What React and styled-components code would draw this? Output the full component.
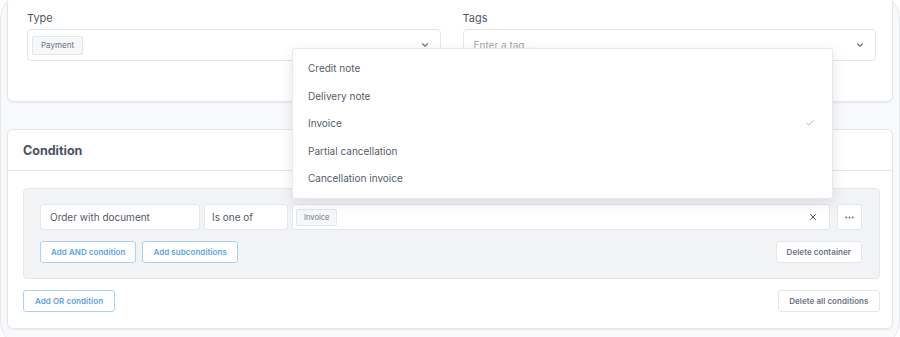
import React from "react";
import styled, { createGlobalStyle } from "styled-components";
import { ChevronDown, X, Check, Ellipsis } from "lucide-react";

const GlobalStyle = createGlobalStyle`
  html, body { margin: 0; padding: 0; background: #ffffff; overflow: hidden; }
  body { font-family: Inter, "Noto Sans", "Liberation Sans", sans-serif; }
  * { box-sizing: border-box; }
`;

const Frame = styled.div`
  width: 900px;
  height: 360px;
  margin-top: -10px;
  border: 1px solid #e6e8ec;
  border-radius: 30px;
  background: #f8f9fa;
  padding: 0 6px;
  overflow: hidden;
`;

const Card = styled.section`
  background: #ffffff;
  border: 1px solid #e3e6ea;
  border-radius: 6px;
  box-shadow: 0 1px 2px rgba(16, 24, 40, 0.06);
  margin-top: ${(p) => p.$mt}px;
`;

const TopCard = styled(Card)`
  padding: 14px 16px 40px 19px;
`;

const FieldGrid = styled.div`
  display: grid;
  grid-template-columns: 1fr 1fr;
  column-gap: 22px;
`;

const Field = styled.div`
  display: flex;
  flex-direction: column;
  gap: 4px;
`;

const Label = styled.label`
  font-size: 11px;
  line-height: 14px;
  color: #525966;
`;

const SelectBox = styled.div`
  height: 32px;
  border: 1px solid #e3e6ea;
  border-radius: 4px;
  background: #fff;
  display: flex;
  align-items: center;
  padding: 0 10px 0 4px;
  gap: 6px;
`;

const Placeholder = styled.span`
  flex: 1;
  padding-left: 6px;
  font-size: 10px;
  color: #a0a6b0;
`;

const Spacer = styled.span`
  flex: 1;
`;

const Tag = styled.span`
  display: inline-flex;
  align-items: center;
  height: ${(p) => p.$h}px;
  padding: 0 ${(p) => p.$px}px;
  border: 1px solid #e3e6ea;
  border-radius: 2px;
  background: #f6f7f8;
  font-size: ${(p) => p.$fs}px;
  color: #6b7280;
`;

const Header = styled.header`
  height: 41px;
  border-bottom: 1px solid #e3e6ea;
  display: flex;
  align-items: center;
  padding-left: 15px;
  font-size: 12.5px;
  font-weight: 700;
  color: #4a5160;
`;

const Body = styled.div`
  padding: 17px 12px 16px 15px;
`;

const Group = styled.div`
  background: #f2f3f5;
  border: 1px solid #e3e6ea;
  border-radius: 4px;
  padding: 15px 17px 15px 16px;
`;

const CondRow = styled.div`
  display: flex;
  align-items: stretch;
  height: 26px;
  gap: 4px;
`;

const Input = styled.div`
  position: relative;
  width: ${(p) => (p.$w ? `${p.$w}px` : "auto")};
  flex: ${(p) => (p.$w ? "none" : "1")};
  background: #fff;
  border: 1px solid #e3e6ea;
  border-radius: 3px;
  display: flex;
  align-items: center;
  padding: 0 ${(p) => p.$pr || 8}px 0 ${(p) => p.$pl}px;
  font-size: 10px;
  color: #525966;
  gap: 6px;
`;

const MoreButton = styled.button`
  width: 25px;
  margin-left: 3px;
  background: #fff;
  border: 1px solid #e3e6ea;
  border-radius: 3px;
  display: flex;
  align-items: center;
  justify-content: center;
  padding: 0;
  color: #6b7280;
`;

const ActionRow = styled.div`
  display: flex;
  align-items: center;
  gap: 6px;
  margin-top: ${(p) => p.$mt}px;
`;

const Button = styled.button`
  height: ${(p) => p.$h || 22}px;
  padding: 0 ${(p) => p.$px || 10}px;
  border-radius: 3px;
  font-family: Inter, "Noto Sans", "Liberation Sans", sans-serif;
  font-size: 8px;
  font-weight: 600;
  letter-spacing: 0.05px;
  background: #fff;
  cursor: pointer;
  border: ${(p) => (p.$primary ? "1.5px solid #a9d3f6" : "1px solid #e3e6ea")};
  color: ${(p) => (p.$primary ? "#5aa2e3" : "#6b7280")};
  margin-left: ${(p) => (p.$right ? "auto" : "0")};
`;

const Menu = styled.ul`
  position: absolute;
  left: -1px;
  right: -4px;
  bottom: calc(100% + 6px);
  margin: 0;
  padding: 6px 0;
  list-style: none;
  background: #fff;
  border: 1px solid #e6e8ec;
  border-radius: 3px;
  box-shadow: 0 4px 14px rgba(16, 24, 40, 0.1);
  z-index: 10;
`;

const MenuItem = styled.li`
  height: 27.5px;
  display: flex;
  align-items: center;
  justify-content: space-between;
  padding: 0 17px 0 15px;
  font-size: 10px;
  color: #555c68;
`;

const items = [
  "Credit note",
  "Delivery note",
  "Invoice",
  "Partial cancellation",
  "Cancellation invoice",
];

export default function App() {
  return (
    <>
      <GlobalStyle />
      <Frame>
        <TopCard $mt={5}>
          <FieldGrid>
            <Field>
              <Label>Type</Label>
              <SelectBox>
                <Tag $h={19} $px={8} $fs={8}>Payment</Tag>
                <Spacer />
                <ChevronDown size={10} strokeWidth={2.6} color="#6b7280" />
              </SelectBox>
            </Field>
            <Field>
              <Label>Tags</Label>
              <SelectBox>
                <Placeholder>Enter a tag...</Placeholder>
                <ChevronDown size={10} strokeWidth={2.6} color="#6b7280" />
              </SelectBox>
            </Field>
          </FieldGrid>
        </TopCard>

        <Card $mt={27}>
          <Header>Condition</Header>
          <Body>
            <Group>
              <CondRow>
                <Input $w={160} $pl={9}>Order with document</Input>
                <Input $w={84} $pl={7}>Is one of</Input>
                <Input $pl={3} $pr={11}>
                  <Tag $h={17} $px={7} $fs={7.5}>Invoice</Tag>
                  <Spacer />
                  <X size={10} strokeWidth={2.4} color="#4b5563" />
                  <Menu>
                    {items.map((it) => (
                      <MenuItem key={it}>
                        {it}
                        {it === "Invoice" && (
                          <Check size={10} strokeWidth={1.8} color="#9aa0a9" />
                        )}
                      </MenuItem>
                    ))}
                  </Menu>
                </Input>
                <MoreButton aria-label="More">
                  <Ellipsis size={11} strokeWidth={2.4} />
                </MoreButton>
              </CondRow>
              <ActionRow $mt={11}>
                <Button $primary>Add AND condition</Button>
                <Button $primary>Add subconditions</Button>
                <Button $right>Delete container</Button>
              </ActionRow>
            </Group>
            <ActionRow $mt={11}>
              <Button $primary $px={11}>Add OR condition</Button>
              <Button $right $px={10.5}>Delete all conditions</Button>
            </ActionRow>
          </Body>
        </Card>
      </Frame>
    </>
  );
}
